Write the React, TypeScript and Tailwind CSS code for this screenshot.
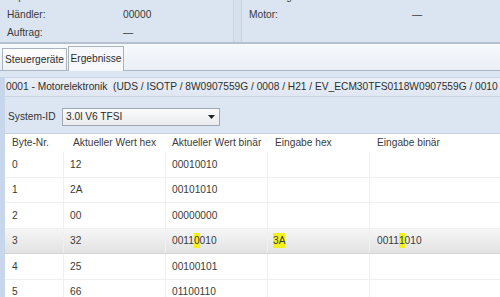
import React from 'react';

type Row = { nr: string; hex: string; bin: React.ReactNode; inHex?: React.ReactNode; inBin?: React.ReactNode; active?: boolean };

const Mark: React.FC<{ children: React.ReactNode }> = ({ children }) => (
    <span className="bg-[#f4f01c]">{children}</span>
);

const rows: Row[] = [
    { nr: '0', hex: '12', bin: '00010010' },
    { nr: '1', hex: '2A', bin: '00101010' },
    { nr: '2', hex: '00', bin: '00000000' },
    {
        nr: '3',
        hex: '32',
        bin: <>0011<Mark>0</Mark>010</>,
        inHex: <Mark>3A</Mark>,
        inBin: <>0011<Mark>1</Mark>010</>,
        active: true,
    },
    { nr: '4', hex: '25', bin: '00100101' },
    { nr: '5', hex: '66', bin: '01100110' },
];

const InfoRow: React.FC<{ label: string; value: string; valueX: string }> = ({ label, value, valueX }) => (
    <div className="flex h-[18px] items-center">
        <span className={`${valueX} shrink-0`}>{label}</span>
        <span>{value}</span>
    </div>
);

const cols = 'grid grid-cols-[59px_102px_102px_102px_1fr]';

const App: React.FC = () => {
    return (
        <div
            className="w-[500px] h-[297px] overflow-hidden bg-[#dce6f2] text-[10.2px] text-[#3a3a3a]"
            style={{ fontFamily: '"Liberation Sans", Arial, sans-serif' }}
        >
            {/* vehicle info */}
            <div className="flex h-[44px] overflow-hidden border-b-2 border-[#b6c1cf] bg-[#dbe5f1]">
                <div className="w-[234px] border-r border-[#c6d2e0] pl-[7px] mt-[-12px]">
                    <InfoRow label="Importeur:" value="270" valueX="w-[116px]" />
                    <InfoRow label="Händler:" value="00000" valueX="w-[116px]" />
                    <InfoRow label="Auftrag:" value="—" valueX="w-[116px]" />
                </div>
                <div className="w-[8px] border-r border-[#c6d2e0] bg-[#d6e0ec]" />
                <div className="flex-1 pl-[7px] mt-[-12px]">
                    <InfoRow label="Fahrzeug-Ident.-Nr.:" value="WAUZZZ4G7FN" valueX="w-[163px]" />
                    <InfoRow label="Motor:" value="—" valueX="w-[163px]" />
                </div>
            </div>

            {/* tabs */}
            <div className="flex h-[27px] items-end gap-[1px] border-b border-[#a9b7c8] bg-gradient-to-b from-[#f7f9fc] to-[#eaeff6] pl-[2px]">
                <div className="flex h-[22px] w-[65px] items-center justify-center border border-b-0 border-[#a9b3bf] bg-gradient-to-b from-[#ffffff] to-[#eef1f5] text-[#2e2e2e]">
                    Steuergeräte
                </div>
                <div className="mb-[-1px] flex h-[25px] w-[56px] items-center justify-center border border-b-0 border-[#a9b3bf] bg-[#f6f8fb] text-[#2e2e2e]">
                    Ergebnisse
                </div>
            </div>

            {/* result panel */}
            <div className="border-l-[5px] border-[#c7d6ea]">
                <div className="mt-[6px] flex h-[20px] items-center whitespace-nowrap border-y border-[#c9d5e5] bg-gradient-to-b from-[#eaf0f8] to-[#dfe7f2] pl-[1px] text-[#2f2f2f]">
                    0001 - Motorelektronik&nbsp; (UDS / ISOTP / 8W0907559G / 0008 / H21 / EV_ECM30TFS0118W0907559G / 0010
                </div>

                <div className="flex h-[36px] items-center pl-[3px] pt-[3px]">
                    <span className="w-[54px] text-[#333]">System-ID</span>
                    <div className="flex h-[18px] w-[158px] items-center justify-between border border-[#9ea7b2] bg-gradient-to-b from-[#fbfbfb] to-[#e9ebee] pl-[3px] pr-[4px] text-[#2a2a2a]">
                        <span>3.0l V6 TFSI</span>
                        <svg width="7" height="4" viewBox="0 0 7 4">
                            <path d="M0 0h7L3.5 4z" fill="#222" />
                        </svg>
                    </div>
                </div>

                {/* table */}
                <div className="bg-white">
                    <div className={`${cols} h-[19px] items-center border-t border-[#c9d3df] text-[#3c3c3c]`}>
                        <div className="pl-[7px]">Byte-Nr.</div>
                        <div className="pl-[9px]">Aktueller Wert hex</div>
                        <div className="pl-[6px]">Aktueller Wert binär</div>
                        <div className="pl-[7px]">Eingabe hex</div>
                        <div className="pl-[7px]">Eingabe binär</div>
                    </div>
                    {rows.map((r) => (
                        <div
                            key={r.nr}
                            className={`${cols} h-[25.5px] items-center border-b ${
                                r.active
                                    ? 'border-[#d4d4d4] bg-gradient-to-b from-[#f6f6f6] to-[#e2e2e2]'
                                    : 'border-[#efefef]'
                            } text-[#3a3a3a]`}
                        >
                            <div className="flex h-full items-center border-r border-[#f0f0f0] pl-[7px]">{r.nr}</div>
                            <div className="flex h-full items-center border-r border-[#f0f0f0] pl-[6px]">{r.hex}</div>
                            <div className="flex h-full items-center border-r border-[#f0f0f0] pl-[6px]">{r.bin}</div>
                            <div className="flex h-full items-center border-r border-[#f0f0f0] pl-[5px]">{r.inHex}</div>
                            <div className="flex h-full items-center pl-[7px]">{r.inBin}</div>
                        </div>
                    ))}
                </div>
            </div>
        </div>
    );
};

export default App;
